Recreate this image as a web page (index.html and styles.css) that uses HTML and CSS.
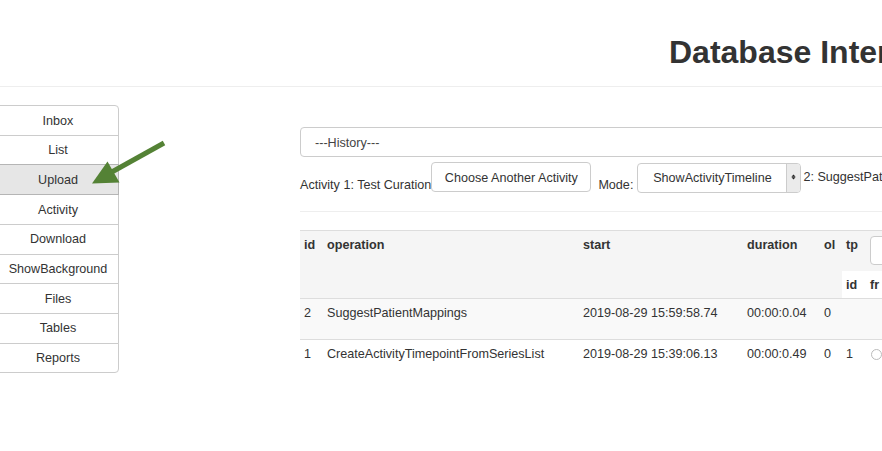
FILE: index.html
```html
<!DOCTYPE html>
<html>
<head>
<meta charset="utf-8">
<link rel="stylesheet" href="styles.css">
</head>
<body>
<header class="top">
  <h1 class="title">Database Interface</h1>
</header>
<div class="page">
  <nav class="side">
    <div class="item">Inbox</div>
    <div class="item">List</div>
    <div class="item active">Upload</div>
    <div class="item">Activity</div>
    <div class="item">Download</div>
    <div class="item">ShowBackground</div>
    <div class="item">Files</div>
    <div class="item">Tables</div>
    <div class="item">Reports</div>
  </nav>
  <main class="content">
    <div class="history">---History---</div>
    <div class="controls">
      <span class="lbl">Activity 1: Test Curation</span>
      <span class="btn">Choose Another Activity</span>
      <span class="lbl mode">Mode:</span>
      <span class="sel">
        <span class="sel-text">ShowActivityTimeline</span>
        <span class="sel-arrow"><svg width="5" height="6" viewBox="0 0 5 6"><path d="M2.5 0.6 L4.6 2.8 L0.4 2.8 Z M2.5 5.4 L4.6 3.2 L0.4 3.2 Z" fill="#222"/></svg></span>
      </span>
      <span class="lbl op">2: SuggestPatientMappings</span>
    </div>
    <hr class="rule">
    <table class="grid">
      <colgroup>
        <col class="c-id"><col class="c-op"><col class="c-start"><col class="c-dur"><col class="c-ol"><col class="c-tp">
      </colgroup>
      <thead>
        <tr>
          <th>id</th>
          <th>operation</th>
          <th>start</th>
          <th>duration</th>
          <th>ol</th>
          <th class="tp">
            <div class="tp-top"><span class="cell tp-label">tp</span><span class="cell"><span class="filter"></span></span></div>
            <div class="tp-sub"><span class="cell">id</span><span class="cell">fr</span></div>
          </th>
        </tr>
      </thead>
      <tbody>
        <tr class="odd">
          <td>2</td>
          <td>SuggestPatientMappings</td>
          <td>2019-08-29 15:59:58.74</td>
          <td>00:00:0.04</td>
          <td>0</td>
          <td class="tp"></td>
        </tr>
        <tr>
          <td>1</td>
          <td>CreateActivityTimepointFromSeriesList</td>
          <td>2019-08-29 15:39:06.13</td>
          <td>00:00:0.49</td>
          <td>0</td>
          <td class="tp"><div class="tp-row"><span class="cell">1</span><span class="cell"><span class="radio"></span></span></div></td>
        </tr>
      </tbody>
    </table>
  </main>
</div>
<svg class="arrow" width="882" height="451" viewBox="0 0 882 451">
  <line x1="164" y1="143" x2="110" y2="173" stroke="#548235" stroke-width="5"/>
  <polygon points="107.5,161.5 92,183.5 119.5,182.5" fill="#548235"/>
</svg>
</body>
</html>
```
FILE: styles.css
```css
html, body {
  margin: 0;
  padding: 0;
  overflow: hidden;
  background: #fff;
}
body {
  width: 882px;
  height: 451px;
  font-family: "Liberation Sans", Arial, sans-serif;
  font-size: 12.6px;
  color: #333;
  position: relative;
}
.top {
  padding: 35px 0 16px 669px;
  border-bottom: 1px solid #eee;
  white-space: nowrap;
}
.title {
  margin: 0;
  font-size: 32px;
  line-height: 35px;
  font-weight: bold;
  color: #333;
}
.page {
  display: flex;
  align-items: flex-start;
}
.side {
  flex: none;
  width: 122px;
  margin-left: -3px;
  padding-top: 18px;
}
.item {
  position: relative;
  border: 1px solid #ccc;
  margin-bottom: -1px;
  padding: 6.5px 0 5.5px;
  line-height: 16.7px;
  text-align: center;
  background: #fff;
}
.item:first-child {
  border-top-right-radius: 4px;
}
.item:last-child {
  border-bottom-right-radius: 4px;
}
.item.active {
  background: #e6e6e6;
  border-color: #b5b5b5;
  z-index: 1;
}
.content {
  flex: none;
  width: 900px;
  margin-left: 181px;
  padding-top: 40px;
}
.history {
  box-sizing: border-box;
  height: 30px;
  border: 1px solid #ccc;
  border-radius: 4px;
  padding: 3px 0 0 14px;
  line-height: 24px;
  color: #444;
}
.controls {
  display: flex;
  align-items: flex-start;
  margin-top: 5px;
  white-space: nowrap;
  line-height: 16px;
}
.lbl {
  margin-top: 14.5px;
}
.btn {
  box-sizing: border-box;
  height: 30px;
  padding: 7px 12.5px 0;
  border: 1px solid #ccc;
  border-radius: 4px;
  background: #fff;
}
.mode {
  margin-left: 7px;
}
.sel {
  display: flex;
  box-sizing: border-box;
  width: 164px;
  height: 30px;
  margin-left: 4px;
  margin-top: 1px;
  border: 1px solid #ccc;
  border-radius: 4px;
  overflow: hidden;
  background: #fff;
}
.sel-text {
  flex: 1;
  text-align: center;
  padding-top: 6px;
}
.sel-arrow {
  flex: none;
  width: 13px;
  background: #ebebeb;
  border-left: 1px solid #ccc;
  display: flex;
  align-items: center;
  justify-content: center;
  padding-bottom: 2px;
}
.op {
  margin-left: 2px;
  margin-top: 6.5px;
}
.rule {
  margin: 18px 0 0;
  border: 0;
  border-top: 1px solid #eee;
  height: 0;
}
.grid {
  margin-top: 18px;
  border-collapse: collapse;
  table-layout: fixed;
  width: 700px;
  line-height: 16px;
  white-space: nowrap;
}
.c-id { width: 23px; }
.c-op { width: 256px; }
.c-start { width: 164px; }
.c-dur { width: 77px; }
.c-ol { width: 22px; }
.c-tp { width: 158px; }
.grid thead tr {
  border-top: 1px solid #ddd;
  border-bottom: 1px solid #ddd;
}
.grid th {
  background: #f5f5f5;
  text-align: left;
  vertical-align: top;
  padding: 6px 4px 0;
  font-weight: bold;
}
.grid th.tp {
  padding: 0;
}
.tp-top, .tp-sub, .tp-row {
  display: grid;
  grid-template-columns: 24px 1fr;
}
.cell {
  padding-left: 4px;
}
.tp-top {
  padding: 5px 0 6px;
}
.tp-label {
  padding-top: 1px;
}
.filter {
  display: block;
  box-sizing: border-box;
  width: 140px;
  height: 29px;
  border: 1px solid #ccc;
  border-radius: 4px;
  background: #fff;
}
.tp-sub {
  background: #fff;
  height: 27px;
  box-sizing: border-box;
  padding-top: 6px;
}
.grid td {
  padding: 6px 4px 18px;
  vertical-align: top;
}
.grid td.tp {
  padding: 6px 0 18px;
}
.grid tbody tr.odd {
  background: #f9f9f9;
  border-bottom: 1px solid #ddd;
}
.radio {
  display: block;
  box-sizing: border-box;
  width: 11px;
  height: 11px;
  margin: 3px 0 0 1px;
  border: 1px solid #bbb;
  border-radius: 50%;
  background: #fff;
}
.arrow {
  position: absolute;
  left: 0;
  top: 0;
  z-index: 5;
  pointer-events: none;
}
```
